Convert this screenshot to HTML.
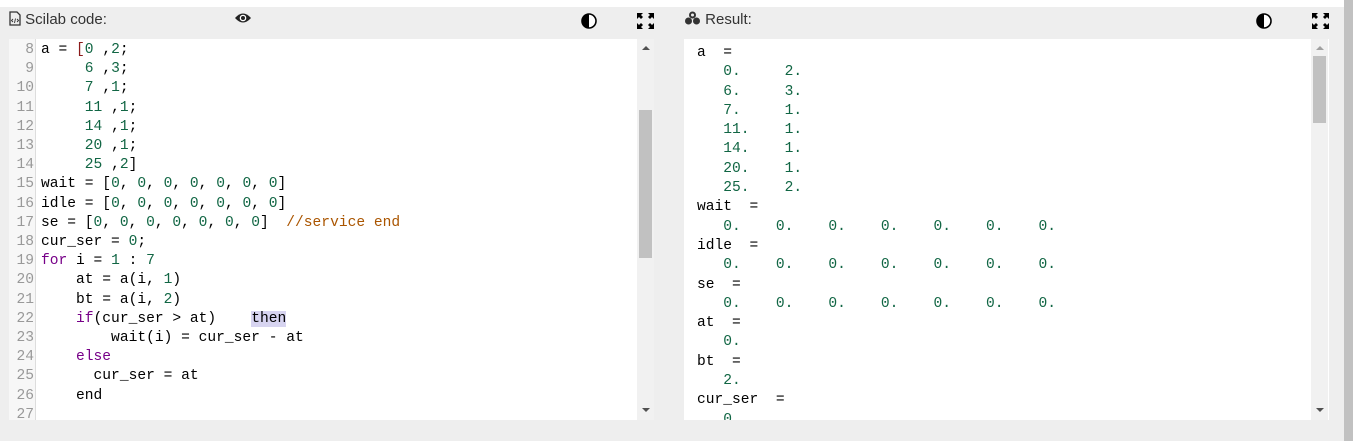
<!DOCTYPE html>
<html><head><style>
*{margin:0;padding:0;box-sizing:border-box}
body{width:1353px;height:441px;background:#fff;position:relative;overflow:hidden;font-family:"Liberation Sans",sans-serif}
.bg{position:absolute;left:0;top:7px;width:1344px;height:434px;background:#eeeeee}
.pg{position:absolute;left:1344px;top:0;width:9px;height:441px;background:#c1c1c1}
.t{position:absolute;font-size:15px;color:#333;top:11px}
.ed{position:absolute;top:39px;height:381px;background:#fff;overflow:hidden}
.gut{position:absolute;left:0;top:0;width:27px;height:381px;background:#f7f7f7;border-right:1px solid #ddd}
pre{font-family:"Liberation Mono",monospace;font-size:14.6px;line-height:19.2px;color:#000}
.ln{position:absolute;left:0;top:2px;width:25px;text-align:right;color:#999}
.code{position:absolute;left:32px;top:2px}
.n{color:#164}.k{color:#708}.c{color:#a50}.b{color:#8b1a1a}
.sb{position:absolute;top:0;width:17px;height:381px;background:#f1f1f1}
.th{position:absolute;left:2px;width:13px;background:#c1c1c1}
.ar{position:absolute;left:5px;width:0;height:0;border-left:4px solid transparent;border-right:4px solid transparent}
</style></head><body>
<div class="bg"></div><div class="pg"></div>
<div class="t" style="left:9px"><svg width="12" height="15" viewBox="0 0 12 15" style="vertical-align:-2px"><path d="M1 1h7l3 3v10H1z" fill="none" stroke="#333" stroke-width="1.3"/><path d="M4 8l-1.5 1.5L4 11M8 8l1.5 1.5L8 11M6.5 7.5l-1 4.5" stroke="#333" fill="none" stroke-width="0.9"/></svg> Scilab code:</div>
<svg style="position:absolute;left:234px;top:12px" width="18" height="12" viewBox="0 0 18 12"><path d="M1 6Q9-3 17 6Q9 15 1 6z" fill="#222"/><circle cx="9" cy="6" r="3.3" fill="#fff"/><circle cx="9" cy="6" r="2" fill="#222"/></svg>
<svg style="position:absolute;left:581px;top:13px" width="16" height="16"><circle cx="8" cy="8" r="7" fill="#fff" stroke="#000" stroke-width="1.6"/><path d="M8 1A7 7 0 0 0 8 15z" fill="#000"/></svg>
<svg style="position:absolute;left:637px;top:13px" width="17" height="16" viewBox="0 0 17 16" fill="#000"><path d="M0 0h6l-2 2 2 2-2 2-2-2-2 2zM17 0h-6l2 2-2 2 2 2 2-2 2 2zM0 16h6l-2-2 2-2-2-2-2 2-2-2zM17 16h-6l2-2-2-2 2-2 2 2 2-2z"/></svg>
<div class="ed" style="left:9px;width:645px">
<div class="gut"></div>
<pre class="ln">8
9
10
11
12
13
14
15
16
17
18
19
20
21
22
23
24
25
26
27</pre>
<pre class="code">a = <span class="b">[</span><span class="n">0</span> ,<span class="n">2</span>;
     <span class="n">6</span> ,<span class="n">3</span>;
     <span class="n">7</span> ,<span class="n">1</span>;
     <span class="n">11</span> ,<span class="n">1</span>;
     <span class="n">14</span> ,<span class="n">1</span>;
     <span class="n">20</span> ,<span class="n">1</span>;
     <span class="n">25</span> ,<span class="n">2</span>]
wait = [<span class="n">0</span>, <span class="n">0</span>, <span class="n">0</span>, <span class="n">0</span>, <span class="n">0</span>, <span class="n">0</span>, <span class="n">0</span>]
idle = [<span class="n">0</span>, <span class="n">0</span>, <span class="n">0</span>, <span class="n">0</span>, <span class="n">0</span>, <span class="n">0</span>, <span class="n">0</span>]
se = [<span class="n">0</span>, <span class="n">0</span>, <span class="n">0</span>, <span class="n">0</span>, <span class="n">0</span>, <span class="n">0</span>, <span class="n">0</span>]  <span class="c">//service end</span>
cur_ser = <span class="n">0</span>;
<span class="k">for</span> i = <span class="n">1</span> : <span class="n">7</span>
    at = a(i, <span class="n">1</span>)
    bt = a(i, <span class="n">2</span>)
    <span class="k">if</span>(cur_ser &gt; at)    <span style="background:#d7d4f0">then</span>
        wait(i) = cur_ser - at
    <span class="k">else</span>
      cur_ser = at
    end
</pre>
<div class="sb" style="left:628px"><div class="ar" style="top:7px;border-bottom:4px solid #505050"></div><div class="th" style="top:71px;height:148px"></div><div class="ar" style="top:369px;border-top:4px solid #505050"></div></div>
</div>
<div class="t" style="left:684px"><svg width="17" height="14" viewBox="0 0 17 14" style="vertical-align:-1px"><circle cx="8.5" cy="4" r="3.5" fill="#333"/><circle cx="4.5" cy="10" r="3.5" fill="#333"/><circle cx="12.5" cy="10" r="3.5" fill="#333"/><circle cx="8.5" cy="4" r="1.5" fill="#eee"/></svg> Result:</div>
<svg style="position:absolute;left:1256px;top:13px" width="16" height="16"><circle cx="8" cy="8" r="7" fill="#fff" stroke="#000" stroke-width="1.6"/><path d="M8 1A7 7 0 0 0 8 15z" fill="#000"/></svg>
<svg style="position:absolute;left:1312px;top:13px" width="17" height="16" viewBox="0 0 17 16" fill="#000"><path d="M0 0h6l-2 2 2 2-2 2-2-2-2 2zM17 0h-6l2 2-2 2 2 2 2-2 2 2zM0 16h6l-2-2 2-2-2-2-2 2-2-2zM17 16h-6l2-2-2-2 2-2 2 2 2-2z"/></svg>
<div class="ed" style="left:684px;width:645px">
<pre style="position:absolute;left:13px;top:5px;line-height:19.3px">a  =
<span class="n">   0.     2.
   6.     3.
   7.     1.
   11.    1.
   14.    1.
   20.    1.
   25.    2.</span>
wait  =
<span class="n">   0.    0.    0.    0.    0.    0.    0.</span>
idle  =
<span class="n">   0.    0.    0.    0.    0.    0.    0.</span>
se  =
<span class="n">   0.    0.    0.    0.    0.    0.    0.</span>
at  =
<span class="n">   0.</span>
bt  =
<span class="n">   2.</span>
cur_ser  =
<span class="n">   0.</span></pre>
<div class="sb" style="left:627px"><div class="ar" style="top:7px;border-bottom:4px solid #a0a0a0"></div><div class="th" style="top:17px;height:67px"></div><div class="ar" style="top:369px;border-top:4px solid #505050"></div></div>
</div>
</body></html>
